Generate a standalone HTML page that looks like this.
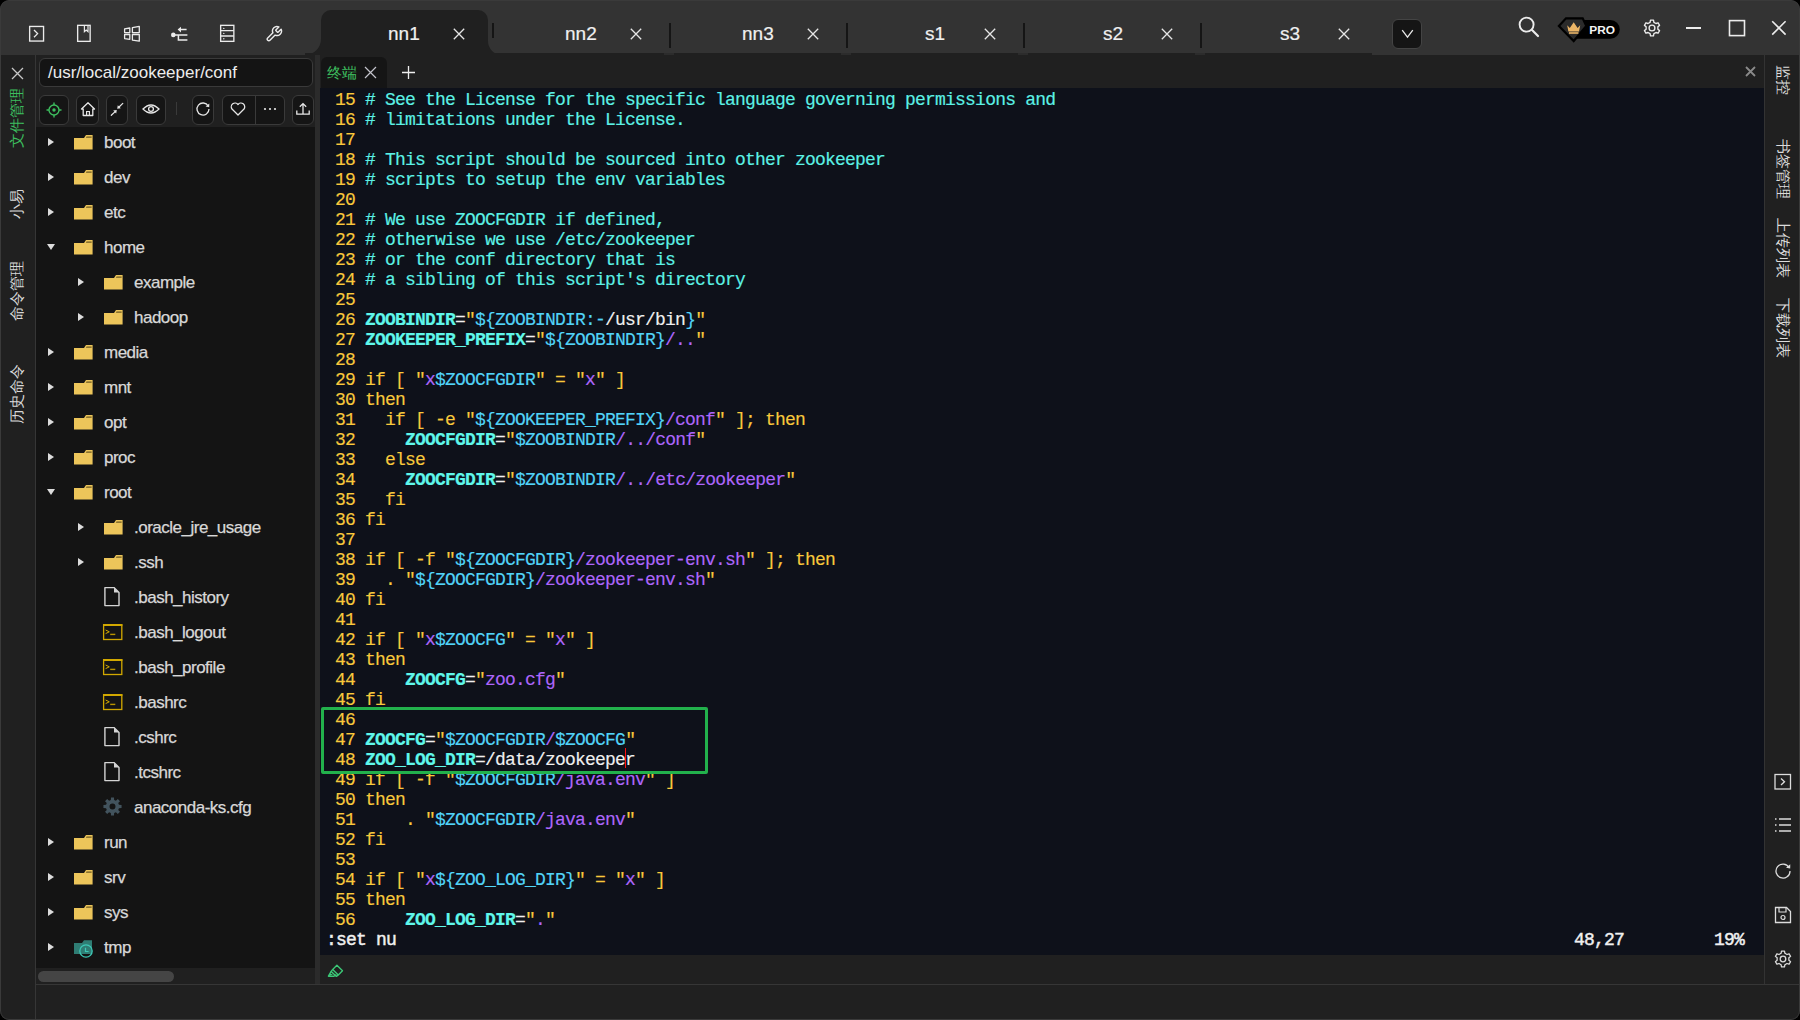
<!DOCTYPE html>
<html><head><meta charset="utf-8">
<style>
*{box-sizing:border-box}
html,body{margin:0;padding:0;width:1800px;height:1020px;overflow:hidden;background:#000}
body{font-family:"Liberation Sans",sans-serif;position:relative}
.abs{position:absolute}
svg{display:block}
#win{position:absolute;left:0;top:0;width:1800px;height:1020px;border-radius:9px;background:#333333;overflow:hidden}
/* title tabs */
.tab{position:absolute;top:10px;height:45px;color:#e6e6e6;font-size:18px}
.tabtxt{position:absolute;top:24px;font-size:19px;color:#f0f0f0;line-height:20px;-webkit-text-stroke:0.2px #f0f0f0}
.tabx{position:absolute;top:28px}
.tsep{position:absolute;top:23px;width:2px;height:25px;background:#151515}
/* panels */
#lstrip{position:absolute;left:0;top:55px;width:36px;height:965px;background:#202020;border-right:1px solid #363636}
#fpanel{position:absolute;left:36px;top:55px;width:279px;height:929px;background:#202020}
#tree{position:absolute;left:36px;top:127px;width:279px;height:841px;background:#141414}
#splitter{position:absolute;left:315px;top:55px;width:5px;height:929px;background:#2b2b2b}
#ttabbar{position:absolute;left:320px;top:55px;width:1444px;height:33px;background:#202020}
#editor{position:absolute;left:320px;top:88px;width:1444px;height:867px;background:#0e111a;overflow:hidden}
#ebar{position:absolute;left:320px;top:955px;width:1444px;height:29px;background:#202020}
#rstrip{position:absolute;left:1764px;top:55px;width:36px;height:929px;background:#202020;border-left:1px solid #333}
#bottom{position:absolute;left:36px;top:984px;width:1764px;height:36px;background:#202020;border-top:1px solid #363636}
.tn{position:absolute;font-size:17px;letter-spacing:-0.5px;color:#d8d8d8;-webkit-text-stroke:0.25px #d8d8d8;line-height:22px;white-space:pre}
.btn{position:absolute;top:95px;height:30px;border:1px solid #3a3a3a;border-radius:6px;background:#151515}
/* code */
.ln{position:absolute;left:5px;height:20px;line-height:20px;font-family:"Liberation Mono",monospace;font-size:18px;letter-spacing:-0.8px;white-space:pre;transform:scaleY(1.05);transform-origin:0 16px;-webkit-text-stroke:0.15px}
.n{color:#f9c93c}
.c{color:#5cf2e6}
.k{color:#f9c93c}
.v{color:#5ff7ea;font-weight:bold}
.i{color:#52d4f8}
.s{color:#ad66fb}
.w{color:#f0f0f0}
.vt{position:absolute;font-size:15px;line-height:16px;white-space:nowrap;transform-origin:0 0}
</style></head><body>
<div id="win">
  <!-- title bar toolbar icons -->
  <svg class="abs" style="left:28px;top:25px" width="18" height="18" viewBox="0 0 18 18"><rect x="1.65" y="1.45" width="13.9" height="14.6" fill="none" stroke="#ebebeb" stroke-width="1.35"/><path d="M6 5 L9.6 8.6 L6 12.2" fill="none" stroke="#ebebeb" stroke-width="1.3"/></svg>
  <svg class="abs" style="left:76px;top:24px" width="16" height="19" viewBox="0 0 16 19"><rect x="1.65" y="1.35" width="12.5" height="16" fill="none" stroke="#ebebeb" stroke-width="1.35"/><path d="M8.4 1.2 V7.6 L10.2 6 L12 7.6 V1.2" fill="none" stroke="#ebebeb" stroke-width="1.2"/></svg>
  <svg class="abs" style="left:123px;top:25px" width="18" height="18" viewBox="0 0 18 18"><path d="M1.6 3.8 L6.8 3 V7.6 H1.6 Z M9.4 2.6 L16.3 1.4 V7.6 H9.4 Z M1.6 9.5 H6.8 V14.3 L1.6 13.6 Z M9.4 9.5 H16.3 V16.2 L9.4 15.1 Z" fill="none" stroke="#ebebeb" stroke-width="1.3" stroke-linejoin="round"/></svg>
  <svg class="abs" style="left:170px;top:25px" width="19" height="17" viewBox="0 0 19 17"><path d="M10.5 4.6 H16.6" stroke="#ebebeb" stroke-width="1.5"/><path d="M7.6 4.6 L11 1.8 V7.4 Z" fill="#ebebeb"/><circle cx="3.3" cy="9.9" r="2.3" fill="#ebebeb"/><path d="M3.3 9.9 H17.4 M8.4 9.9 V14.9 H17.4" fill="none" stroke="#ebebeb" stroke-width="1.5"/></svg>
  <svg class="abs" style="left:219px;top:24px" width="17" height="19" viewBox="0 0 17 19"><rect x="1.65" y="1.35" width="13.2" height="16" fill="none" stroke="#ebebeb" stroke-width="1.35"/><path d="M1.65 6.6 H14.85 M1.65 12 H14.85" stroke="#ebebeb" stroke-width="1.3"/><circle cx="4.8" cy="4.4" r="0.7" fill="#ebebeb"/><circle cx="4.8" cy="9.4" r="0.7" fill="#ebebeb"/><circle cx="4.8" cy="14.8" r="0.7" fill="#ebebeb"/></svg>
  <svg class="abs" style="left:265px;top:25px" width="18" height="18" viewBox="0 0 24 24"><path d="M14.7 6.3a1 1 0 0 0 0 1.4l1.6 1.6a1 1 0 0 0 1.4 0l3.77-3.77a6 6 0 0 1-7.94 7.94l-6.91 6.91a2.12 2.12 0 0 1-3-3l6.91-6.91a6 6 0 0 1 7.94-7.94l-3.76 3.76z" fill="none" stroke="#ebebeb" stroke-width="1.9" stroke-linejoin="round"/></svg>

  <!-- active tab -->
  <div class="abs" style="left:321px;top:10px;width:167px;height:46px;background:#202020;border-radius:10px 10px 0 0"></div>
  <svg class="abs" style="left:305px;top:39px" width="16" height="16" viewBox="0 0 16 16"><path d="M0 16 A16 16 0 0 0 16 0 V16 Z" fill="#202020"/></svg>
  <svg class="abs" style="left:488px;top:41px" width="14" height="14" viewBox="0 0 14 14"><path d="M14 14 A14 14 0 0 1 0 0 V14 Z" fill="#202020"/></svg>
  <div class="tabtxt" style="left:388px">nn1</div>
  <div class="tabtxt" style="left:565px">nn2</div>
  <div class="tabtxt" style="left:742px">nn3</div>
  <div class="tabtxt" style="left:925px">s1</div>
  <div class="tabtxt" style="left:1103px">s2</div>
  <div class="tabtxt" style="left:1280px">s3</div>
  <svg class="abs" style="left:453px;top:28px" width="12" height="12" viewBox="0 0 12 12"><path d="M0.8 0.8 L11.2 11.2 M11.2 0.8 L0.8 11.2" stroke="#e6e6e6" stroke-width="1.3"/></svg><svg class="abs" style="left:630px;top:28px" width="12" height="12" viewBox="0 0 12 12"><path d="M0.8 0.8 L11.2 11.2 M11.2 0.8 L0.8 11.2" stroke="#e6e6e6" stroke-width="1.3"/></svg><svg class="abs" style="left:807px;top:28px" width="12" height="12" viewBox="0 0 12 12"><path d="M0.8 0.8 L11.2 11.2 M11.2 0.8 L0.8 11.2" stroke="#e6e6e6" stroke-width="1.3"/></svg><svg class="abs" style="left:984px;top:28px" width="12" height="12" viewBox="0 0 12 12"><path d="M0.8 0.8 L11.2 11.2 M11.2 0.8 L0.8 11.2" stroke="#e6e6e6" stroke-width="1.3"/></svg><svg class="abs" style="left:1161px;top:28px" width="12" height="12" viewBox="0 0 12 12"><path d="M0.8 0.8 L11.2 11.2 M11.2 0.8 L0.8 11.2" stroke="#e6e6e6" stroke-width="1.3"/></svg><svg class="abs" style="left:1338px;top:28px" width="12" height="12" viewBox="0 0 12 12"><path d="M0.8 0.8 L11.2 11.2 M11.2 0.8 L0.8 11.2" stroke="#e6e6e6" stroke-width="1.3"/></svg>
  <div class="abs" style="left:305px;top:53px;width:1067px;height:2px;background:#202020"></div>
  <div class="abs" style="left:664px;top:53px;width:10px;height:2px;background:#2c2c2c"></div>
  <div class="abs" style="left:841px;top:53px;width:10px;height:2px;background:#2c2c2c"></div>
  <div class="abs" style="left:1018px;top:53px;width:10px;height:2px;background:#2c2c2c"></div>
  <div class="abs" style="left:1195px;top:53px;width:10px;height:2px;background:#2c2c2c"></div>
  <div class="tsep" style="left:492px;height:15px"></div>
  <div class="tsep" style="left:669px"></div>
  <div class="tsep" style="left:846px"></div>
  <div class="tsep" style="left:1023px"></div>
  <div class="tsep" style="left:1200px"></div>
  <div class="abs" style="left:1392px;top:19px;width:30px;height:30px;background:#151515;border:1px solid #444;border-radius:6px"></div>
  <svg class="abs" style="left:1401px;top:29px" width="13" height="10" viewBox="0 0 13 10"><path d="M1.2 1.2 L6.5 8.2 L11.8 1.2" fill="none" stroke="#e8e8e8" stroke-width="1.3"/></svg>

  <!-- window controls -->
  <svg class="abs" style="left:1518px;top:16px" width="22" height="22" viewBox="0 0 22 22"><circle cx="8.6" cy="8.6" r="7" fill="none" stroke="#ececec" stroke-width="1.9"/><path d="M13.8 13.8 L20 20" stroke="#ececec" stroke-width="2.2" stroke-linecap="round"/></svg>
  <svg class="abs" style="left:1557px;top:16px" width="66" height="27" viewBox="0 0 66 27"><path d="M18 4 H53.4 A9.35 9.35 0 0 1 53.4 22.7 H18 Z" fill="#000"/><path d="M1.9 10 L9 2.3 H25.7 L29.3 10 L16.7 25 Z" fill="#2b2b2b" stroke="#000" stroke-width="2.2" stroke-linejoin="miter"/><path d="M10.2 9.2 L12.8 12 L16.7 6.3 L20.6 12 L23.2 9.2 L22 15.4 H11.4 Z" fill="#ebb566"/><rect x="12" y="16.2" width="9.4" height="1.6" fill="#ebb566"/><text x="32.3" y="17.6" font-family="Liberation Sans" font-weight="bold" font-size="11.5" fill="#f4f4f4" textLength="25.7" lengthAdjust="spacingAndGlyphs">PRO</text></svg>
  <svg class="abs" style="left:1643px;top:19px" width="18" height="18" viewBox="0 0 18 18"><path d="M7.09 3.31 L7.50 1.14 L10.50 1.14 L10.91 3.31 L12.97 4.50 L15.06 3.77 L16.56 6.37 L14.88 7.81 L14.88 10.19 L16.56 11.63 L15.06 14.23 L12.97 13.50 L10.91 14.69 L10.50 16.86 L7.50 16.86 L7.09 14.69 L5.03 13.50 L2.94 14.23 L1.44 11.63 L3.12 10.19 L3.12 7.81 L1.44 6.37 L2.94 3.77 L5.03 4.50Z" fill="none" stroke="#ececec" stroke-width="1.35" stroke-linejoin="round"/><circle cx="9" cy="9" r="2.9" fill="none" stroke="#ececec" stroke-width="1.35"/></svg>
  <div class="abs" style="left:1686px;top:27px;width:15px;height:1.6px;background:#ececec"></div>
  <svg class="abs" style="left:1728px;top:19px" width="18" height="18" viewBox="0 0 18 18"><rect x="1.5" y="1.6" width="15" height="15" fill="none" stroke="#ececec" stroke-width="1.6"/></svg>
  <svg class="abs" style="left:1771px;top:20px" width="16" height="16" viewBox="0 0 16 16"><path d="M1.2 1.2 L14.6 14.6 M14.6 1.2 L1.2 14.6" stroke="#ececec" stroke-width="1.6"/></svg>

  <!-- panels -->
  <div id="lstrip"></div>
  <div id="fpanel"></div>
  <div id="tree"></div>
  <div id="splitter"></div>
  <div id="ttabbar"></div>
  <div id="editor">
<div class="ln" style="top:2px"><span class="n"> 15 </span><span class="c"># See the License for the specific language governing permissions and</span></div>
<div class="ln" style="top:22px"><span class="n"> 16 </span><span class="c"># limitations under the License.</span></div>
<div class="ln" style="top:42px"><span class="n"> 17 </span></div>
<div class="ln" style="top:62px"><span class="n"> 18 </span><span class="c"># This script should be sourced into other zookeeper</span></div>
<div class="ln" style="top:82px"><span class="n"> 19 </span><span class="c"># scripts to setup the env variables</span></div>
<div class="ln" style="top:102px"><span class="n"> 20 </span></div>
<div class="ln" style="top:122px"><span class="n"> 21 </span><span class="c"># We use ZOOCFGDIR if defined,</span></div>
<div class="ln" style="top:142px"><span class="n"> 22 </span><span class="c"># otherwise we use /etc/zookeeper</span></div>
<div class="ln" style="top:162px"><span class="n"> 23 </span><span class="c"># or the conf directory that is</span></div>
<div class="ln" style="top:182px"><span class="n"> 24 </span><span class="c"># a sibling of this script&#x27;s directory</span></div>
<div class="ln" style="top:202px"><span class="n"> 25 </span></div>
<div class="ln" style="top:222px"><span class="n"> 26 </span><span class="v">ZOOBINDIR</span><span class="w">=</span><span class="k">&quot;</span><span class="i">${ZOOBINDIR:-</span><span class="w">/usr/bin</span><span class="i">}</span><span class="k">&quot;</span></div>
<div class="ln" style="top:242px"><span class="n"> 27 </span><span class="v">ZOOKEEPER_PREFIX</span><span class="w">=</span><span class="k">&quot;</span><span class="i">${ZOOBINDIR}</span><span class="s">/..</span><span class="k">&quot;</span></div>
<div class="ln" style="top:262px"><span class="n"> 28 </span></div>
<div class="ln" style="top:282px"><span class="n"> 29 </span><span class="k">if [ &quot;</span><span class="s">x</span><span class="i">$ZOOCFGDIR</span><span class="k">&quot; = &quot;</span><span class="s">x</span><span class="k">&quot; ]</span></div>
<div class="ln" style="top:302px"><span class="n"> 30 </span><span class="k">then</span></div>
<div class="ln" style="top:322px"><span class="n"> 31 </span><span class="k">  if [ -e &quot;</span><span class="i">${ZOOKEEPER_PREFIX}</span><span class="s">/conf</span><span class="k">&quot; ]; then</span></div>
<div class="ln" style="top:342px"><span class="n"> 32 </span><span class="w">    </span><span class="v">ZOOCFGDIR</span><span class="w">=</span><span class="k">&quot;</span><span class="i">$ZOOBINDIR</span><span class="s">/../conf</span><span class="k">&quot;</span></div>
<div class="ln" style="top:362px"><span class="n"> 33 </span><span class="k">  else</span></div>
<div class="ln" style="top:382px"><span class="n"> 34 </span><span class="w">    </span><span class="v">ZOOCFGDIR</span><span class="w">=</span><span class="k">&quot;</span><span class="i">$ZOOBINDIR</span><span class="s">/../etc/zookeeper</span><span class="k">&quot;</span></div>
<div class="ln" style="top:402px"><span class="n"> 35 </span><span class="k">  fi</span></div>
<div class="ln" style="top:422px"><span class="n"> 36 </span><span class="k">fi</span></div>
<div class="ln" style="top:442px"><span class="n"> 37 </span></div>
<div class="ln" style="top:462px"><span class="n"> 38 </span><span class="k">if [ -f &quot;</span><span class="i">${ZOOCFGDIR}</span><span class="s">/zookeeper-env.sh</span><span class="k">&quot; ]; then</span></div>
<div class="ln" style="top:482px"><span class="n"> 39 </span><span class="k">  . &quot;</span><span class="i">${ZOOCFGDIR}</span><span class="s">/zookeeper-env.sh</span><span class="k">&quot;</span></div>
<div class="ln" style="top:502px"><span class="n"> 40 </span><span class="k">fi</span></div>
<div class="ln" style="top:522px"><span class="n"> 41 </span></div>
<div class="ln" style="top:542px"><span class="n"> 42 </span><span class="k">if [ &quot;</span><span class="s">x</span><span class="i">$ZOOCFG</span><span class="k">&quot; = &quot;</span><span class="s">x</span><span class="k">&quot; ]</span></div>
<div class="ln" style="top:562px"><span class="n"> 43 </span><span class="k">then</span></div>
<div class="ln" style="top:582px"><span class="n"> 44 </span><span class="w">    </span><span class="v">ZOOCFG</span><span class="w">=</span><span class="k">&quot;</span><span class="s">zoo.cfg</span><span class="k">&quot;</span></div>
<div class="ln" style="top:602px"><span class="n"> 45 </span><span class="k">fi</span></div>
<div class="ln" style="top:622px"><span class="n"> 46 </span></div>
<div class="ln" style="top:642px"><span class="n"> 47 </span><span class="v">ZOOCFG</span><span class="w">=</span><span class="k">&quot;</span><span class="i">$ZOOCFGDIR</span><span class="s">/</span><span class="i">$ZOOCFG</span><span class="k">&quot;</span></div>
<div class="ln" style="top:662px"><span class="n"> 48 </span><span class="v">ZOO_LOG_DIR</span><span class="w">=/data/zookeeper</span></div>
<div class="ln" style="top:682px"><span class="n"> 49 </span><span class="k">if [ -f &quot;</span><span class="i">$ZOOCFGDIR</span><span class="s">/java.env</span><span class="k">&quot; ]</span></div>
<div class="ln" style="top:702px"><span class="n"> 50 </span><span class="k">then</span></div>
<div class="ln" style="top:722px"><span class="n"> 51 </span><span class="k">    . &quot;</span><span class="i">$ZOOCFGDIR</span><span class="s">/java.env</span><span class="k">&quot;</span></div>
<div class="ln" style="top:742px"><span class="n"> 52 </span><span class="k">fi</span></div>
<div class="ln" style="top:762px"><span class="n"> 53 </span></div>
<div class="ln" style="top:782px"><span class="n"> 54 </span><span class="k">if [ &quot;</span><span class="s">x</span><span class="i">${ZOO_LOG_DIR}</span><span class="k">&quot; = &quot;</span><span class="s">x</span><span class="k">&quot; ]</span></div>
<div class="ln" style="top:802px"><span class="n"> 55 </span><span class="k">then</span></div>
<div class="ln" style="top:822px"><span class="n"> 56 </span><span class="w">    </span><span class="v">ZOO_LOG_DIR</span><span class="w">=</span><span class="k">&quot;</span><span class="s">.</span><span class="k">&quot;</span></div>
    <div class="ln" style="top:842px;left:6px;-webkit-text-stroke:0.45px #f0f0f0"><span class="w">:set nu</span></div>
    <div class="ln" style="top:842px;left:1254px;-webkit-text-stroke:0.45px #f0f0f0"><span class="w">48,27</span></div>
    <div class="ln" style="top:842px;left:1394px;-webkit-text-stroke:0.45px #f0f0f0"><span class="w">19%</span></div>
    <div class="abs" style="left:1px;top:619px;width:387px;height:67px;border:3px solid #22b14c;border-radius:2px"></div>
    <div class="abs" style="left:305px;top:660px;width:1px;height:20px;background:#ff1010"></div>
  </div>
  <div id="ebar"></div>
  <div id="rstrip"></div>
  <div id="bottom"></div>

  <!-- left strip -->
  <svg class="abs" style="left:11px;top:67px" width="13" height="13" viewBox="0 0 13 13"><path d="M1 1 L12 12 M12 1 L1 12" stroke="#c8c8c8" stroke-width="1.3"/></svg>
  <div class="vt" style="left:9px;top:148px;transform:rotate(-90deg);color:#3dbd5e">文件管理</div>
  <div class="vt" style="left:9px;top:219px;transform:rotate(-90deg);color:#d8d8d8">小易</div>
  <div class="vt" style="left:9px;top:321px;transform:rotate(-90deg);color:#d8d8d8">命令管理</div>
  <div class="vt" style="left:9px;top:424px;transform:rotate(-90deg);color:#d8d8d8">历史命令</div>

  <!-- file panel -->
  <div class="abs" style="left:39px;top:58px;width:274px;height:29px;border:1px solid #3a3a3a;border-radius:6px;background:#141414"></div>
  <div class="abs" style="left:48px;top:63px;font-size:17px;line-height:20px;color:#ececec">/usr/local/zookeeper/conf</div>
  <div class="btn" style="left:39px;width:30px"></div>
  <div class="btn" style="left:76px;width:23px"></div>
  <div class="btn" style="left:106px;width:22px"></div>
  <div class="btn" style="left:136px;width:30px"></div>
  <div class="abs" style="left:176px;top:102px;width:1px;height:13px;background:#3a3a3a"></div>
  <div class="btn" style="left:192px;width:22px"></div>
  <div class="btn" style="left:222px;width:63px"></div>
  <div class="abs" style="left:255px;top:96px;width:1px;height:28px;background:#3a3a3a"></div>
  <div class="btn" style="left:292px;width:22px"></div>
  <!-- toolbar icons -->
  <svg class="abs" style="left:46px;top:102px" width="16" height="16" viewBox="0 0 16 16"><circle cx="8" cy="8" r="5" fill="none" stroke="#3dbd5e" stroke-width="1.4"/><circle cx="8" cy="8" r="1.7" fill="#3dbd5e"/><path d="M8 0.5 V3 M8 13 V15.5 M0.5 8 H3 M13 8 H15.5" stroke="#3dbd5e" stroke-width="1.4"/></svg>
  <svg class="abs" style="left:80px;top:101px" width="16" height="16" viewBox="0 0 16 16"><path d="M1.5 8 L8 1.8 L14.5 8 H12.8 V14.5 H3.2 V8 Z" fill="none" stroke="#e6e6e6" stroke-width="1.3" stroke-linejoin="round"/><path d="M6.6 14.5 V10.5 H9.4 V14.5" fill="none" stroke="#e6e6e6" stroke-width="1.2"/></svg>
  <svg class="abs" style="left:108px;top:101px" width="18" height="18" viewBox="0 0 18 18"><path d="M3.3 14.3 L7.2 10.6 M14.8 2.4 L10.8 6.3" stroke="#e6e6e6" stroke-width="1.2" stroke-linecap="round"/><path d="M8.8 9 L5.2 9.6 L8.2 12.6 Z M9.2 7.8 L9.8 4.2 L12.8 7.2 Z" fill="#e6e6e6"/></svg>
  <svg class="abs" style="left:142px;top:103px" width="18" height="12" viewBox="0 0 18 12"><path d="M1 6 Q9 -2 17 6 Q9 14 1 6 Z" fill="none" stroke="#e6e6e6" stroke-width="1.3"/><circle cx="9" cy="6" r="2.4" fill="none" stroke="#e6e6e6" stroke-width="1.3"/></svg>
  <svg class="abs" style="left:195px;top:101px" width="16" height="16" viewBox="0 0 16 16"><path d="M13.2 5 A6 6 0 1 0 14 8" fill="none" stroke="#e6e6e6" stroke-width="1.3"/><path d="M14.3 2.5 L14.2 6.3 L10.6 5.6 Z" fill="#e6e6e6"/></svg>
  <svg class="abs" style="left:230px;top:102px" width="16" height="14" viewBox="0 0 16 14"><path d="M8 13 L2 7 A3.4 3.4 0 0 1 8 2.6 A3.4 3.4 0 0 1 14 7 Z" fill="none" stroke="#e6e6e6" stroke-width="1.3" stroke-linejoin="round"/></svg>
  <svg class="abs" style="left:263px;top:107px" width="14" height="4" viewBox="0 0 14 4"><circle cx="2" cy="2" r="1.1" fill="#e6e6e6"/><circle cx="7" cy="2" r="1.1" fill="#e6e6e6"/><circle cx="12" cy="2" r="1.1" fill="#e6e6e6"/></svg>
  <svg class="abs" style="left:295px;top:102px" width="16" height="14" viewBox="0 0 16 14"><path d="M8 12 V2 M4.8 4.8 L8 1.6 L11.2 4.8" fill="none" stroke="#e6e6e6" stroke-width="1.3"/><path d="M1.8 8.5 V12.2 H14.2 V8.5" fill="none" stroke="#e6e6e6" stroke-width="1.3"/></svg>

<div class="abs" style="left:47px;top:137px"><svg class="tri" width="8" height="10" viewBox="0 0 8 10"><path d="M1 1 L7 5 L1 9 Z" fill="#dcdcdc"/></svg></div><div class="abs" style="left:74px;top:134px"><svg width="20" height="16" viewBox="0 0 20 16"><path d="M0 4 H10 L12 1 H18.6 V15.6 H0 Z" fill="#ecc55a"/><path d="M12.5 2.6 H17.6 V3.7 H11.8 Z" fill="#6e5a22"/></svg></div><div class="tn" style="left:104px;top:132px">boot</div>
<div class="abs" style="left:47px;top:172px"><svg class="tri" width="8" height="10" viewBox="0 0 8 10"><path d="M1 1 L7 5 L1 9 Z" fill="#dcdcdc"/></svg></div><div class="abs" style="left:74px;top:169px"><svg width="20" height="16" viewBox="0 0 20 16"><path d="M0 4 H10 L12 1 H18.6 V15.6 H0 Z" fill="#ecc55a"/><path d="M12.5 2.6 H17.6 V3.7 H11.8 Z" fill="#6e5a22"/></svg></div><div class="tn" style="left:104px;top:167px">dev</div>
<div class="abs" style="left:47px;top:207px"><svg class="tri" width="8" height="10" viewBox="0 0 8 10"><path d="M1 1 L7 5 L1 9 Z" fill="#dcdcdc"/></svg></div><div class="abs" style="left:74px;top:204px"><svg width="20" height="16" viewBox="0 0 20 16"><path d="M0 4 H10 L12 1 H18.6 V15.6 H0 Z" fill="#ecc55a"/><path d="M12.5 2.6 H17.6 V3.7 H11.8 Z" fill="#6e5a22"/></svg></div><div class="tn" style="left:104px;top:202px">etc</div>
<div class="abs" style="left:46px;top:243px"><svg class="tri" width="10" height="8" viewBox="0 0 10 8"><path d="M1 1 L9 1 L5 7 Z" fill="#dcdcdc"/></svg></div><div class="abs" style="left:74px;top:239px"><svg width="20" height="16" viewBox="0 0 20 16"><path d="M0 4 H10 L12 1 H18.6 V15.6 H0 Z" fill="#ecc55a"/><path d="M12.5 2.6 H17.6 V3.7 H11.8 Z" fill="#6e5a22"/></svg></div><div class="tn" style="left:104px;top:237px">home</div>
<div class="abs" style="left:77px;top:277px"><svg class="tri" width="8" height="10" viewBox="0 0 8 10"><path d="M1 1 L7 5 L1 9 Z" fill="#dcdcdc"/></svg></div><div class="abs" style="left:104px;top:274px"><svg width="20" height="16" viewBox="0 0 20 16"><path d="M0 4 H10 L12 1 H18.6 V15.6 H0 Z" fill="#ecc55a"/><path d="M12.5 2.6 H17.6 V3.7 H11.8 Z" fill="#6e5a22"/></svg></div><div class="tn" style="left:134px;top:272px">example</div>
<div class="abs" style="left:77px;top:312px"><svg class="tri" width="8" height="10" viewBox="0 0 8 10"><path d="M1 1 L7 5 L1 9 Z" fill="#dcdcdc"/></svg></div><div class="abs" style="left:104px;top:309px"><svg width="20" height="16" viewBox="0 0 20 16"><path d="M0 4 H10 L12 1 H18.6 V15.6 H0 Z" fill="#ecc55a"/><path d="M12.5 2.6 H17.6 V3.7 H11.8 Z" fill="#6e5a22"/></svg></div><div class="tn" style="left:134px;top:307px">hadoop</div>
<div class="abs" style="left:47px;top:347px"><svg class="tri" width="8" height="10" viewBox="0 0 8 10"><path d="M1 1 L7 5 L1 9 Z" fill="#dcdcdc"/></svg></div><div class="abs" style="left:74px;top:344px"><svg width="20" height="16" viewBox="0 0 20 16"><path d="M0 4 H10 L12 1 H18.6 V15.6 H0 Z" fill="#ecc55a"/><path d="M12.5 2.6 H17.6 V3.7 H11.8 Z" fill="#6e5a22"/></svg></div><div class="tn" style="left:104px;top:342px">media</div>
<div class="abs" style="left:47px;top:382px"><svg class="tri" width="8" height="10" viewBox="0 0 8 10"><path d="M1 1 L7 5 L1 9 Z" fill="#dcdcdc"/></svg></div><div class="abs" style="left:74px;top:379px"><svg width="20" height="16" viewBox="0 0 20 16"><path d="M0 4 H10 L12 1 H18.6 V15.6 H0 Z" fill="#ecc55a"/><path d="M12.5 2.6 H17.6 V3.7 H11.8 Z" fill="#6e5a22"/></svg></div><div class="tn" style="left:104px;top:377px">mnt</div>
<div class="abs" style="left:47px;top:417px"><svg class="tri" width="8" height="10" viewBox="0 0 8 10"><path d="M1 1 L7 5 L1 9 Z" fill="#dcdcdc"/></svg></div><div class="abs" style="left:74px;top:414px"><svg width="20" height="16" viewBox="0 0 20 16"><path d="M0 4 H10 L12 1 H18.6 V15.6 H0 Z" fill="#ecc55a"/><path d="M12.5 2.6 H17.6 V3.7 H11.8 Z" fill="#6e5a22"/></svg></div><div class="tn" style="left:104px;top:412px">opt</div>
<div class="abs" style="left:47px;top:452px"><svg class="tri" width="8" height="10" viewBox="0 0 8 10"><path d="M1 1 L7 5 L1 9 Z" fill="#dcdcdc"/></svg></div><div class="abs" style="left:74px;top:449px"><svg width="20" height="16" viewBox="0 0 20 16"><path d="M0 4 H10 L12 1 H18.6 V15.6 H0 Z" fill="#ecc55a"/><path d="M12.5 2.6 H17.6 V3.7 H11.8 Z" fill="#6e5a22"/></svg></div><div class="tn" style="left:104px;top:447px">proc</div>
<div class="abs" style="left:46px;top:488px"><svg class="tri" width="10" height="8" viewBox="0 0 10 8"><path d="M1 1 L9 1 L5 7 Z" fill="#dcdcdc"/></svg></div><div class="abs" style="left:74px;top:484px"><svg width="20" height="16" viewBox="0 0 20 16"><path d="M0 4 H10 L12 1 H18.6 V15.6 H0 Z" fill="#ecc55a"/><path d="M12.5 2.6 H17.6 V3.7 H11.8 Z" fill="#6e5a22"/></svg></div><div class="tn" style="left:104px;top:482px">root</div>
<div class="abs" style="left:77px;top:522px"><svg class="tri" width="8" height="10" viewBox="0 0 8 10"><path d="M1 1 L7 5 L1 9 Z" fill="#dcdcdc"/></svg></div><div class="abs" style="left:104px;top:519px"><svg width="20" height="16" viewBox="0 0 20 16"><path d="M0 4 H10 L12 1 H18.6 V15.6 H0 Z" fill="#ecc55a"/><path d="M12.5 2.6 H17.6 V3.7 H11.8 Z" fill="#6e5a22"/></svg></div><div class="tn" style="left:134px;top:517px">.oracle_jre_usage</div>
<div class="abs" style="left:77px;top:557px"><svg class="tri" width="8" height="10" viewBox="0 0 8 10"><path d="M1 1 L7 5 L1 9 Z" fill="#dcdcdc"/></svg></div><div class="abs" style="left:104px;top:554px"><svg width="20" height="16" viewBox="0 0 20 16"><path d="M0 4 H10 L12 1 H18.6 V15.6 H0 Z" fill="#ecc55a"/><path d="M12.5 2.6 H17.6 V3.7 H11.8 Z" fill="#6e5a22"/></svg></div><div class="tn" style="left:134px;top:552px">.ssh</div>
<div class="abs" style="left:103px;top:586px"><svg width="18" height="21" viewBox="0 0 18 21"><path d="M1.9 1.6 H11 L16 6.6 V19.6 H1.9 Z" fill="none" stroke="#d4d4d4" stroke-width="1.4" stroke-linejoin="round"/><path d="M11 1.6 V6.6 H16 Z" fill="#d4d4d4"/></svg></div><div class="tn" style="left:134px;top:587px">.bash_history</div>
<div class="abs" style="left:102px;top:623px"><svg width="21" height="18" viewBox="0 0 21 18"><rect x="1.6" y="1.9" width="18.2" height="14.6" fill="none" stroke="#d2a800" stroke-width="1.3"/><path d="M1 2 H20.4" stroke="#d2a800" stroke-width="2"/><path d="M3.6 7 L7.3 8.8 L3.6 10.6" fill="none" stroke="#d2a800" stroke-width="1"/><path d="M8.2 11.4 H13.3" stroke="#b89400" stroke-width="1.4"/></svg></div><div class="tn" style="left:134px;top:622px">.bash_logout</div>
<div class="abs" style="left:102px;top:658px"><svg width="21" height="18" viewBox="0 0 21 18"><rect x="1.6" y="1.9" width="18.2" height="14.6" fill="none" stroke="#d2a800" stroke-width="1.3"/><path d="M1 2 H20.4" stroke="#d2a800" stroke-width="2"/><path d="M3.6 7 L7.3 8.8 L3.6 10.6" fill="none" stroke="#d2a800" stroke-width="1"/><path d="M8.2 11.4 H13.3" stroke="#b89400" stroke-width="1.4"/></svg></div><div class="tn" style="left:134px;top:657px">.bash_profile</div>
<div class="abs" style="left:102px;top:693px"><svg width="21" height="18" viewBox="0 0 21 18"><rect x="1.6" y="1.9" width="18.2" height="14.6" fill="none" stroke="#d2a800" stroke-width="1.3"/><path d="M1 2 H20.4" stroke="#d2a800" stroke-width="2"/><path d="M3.6 7 L7.3 8.8 L3.6 10.6" fill="none" stroke="#d2a800" stroke-width="1"/><path d="M8.2 11.4 H13.3" stroke="#b89400" stroke-width="1.4"/></svg></div><div class="tn" style="left:134px;top:692px">.bashrc</div>
<div class="abs" style="left:103px;top:726px"><svg width="18" height="21" viewBox="0 0 18 21"><path d="M1.9 1.6 H11 L16 6.6 V19.6 H1.9 Z" fill="none" stroke="#d4d4d4" stroke-width="1.4" stroke-linejoin="round"/><path d="M11 1.6 V6.6 H16 Z" fill="#d4d4d4"/></svg></div><div class="tn" style="left:134px;top:727px">.cshrc</div>
<div class="abs" style="left:103px;top:761px"><svg width="18" height="21" viewBox="0 0 18 21"><path d="M1.9 1.6 H11 L16 6.6 V19.6 H1.9 Z" fill="none" stroke="#d4d4d4" stroke-width="1.4" stroke-linejoin="round"/><path d="M11 1.6 V6.6 H16 Z" fill="#d4d4d4"/></svg></div><div class="tn" style="left:134px;top:762px">.tcshrc</div>
<div class="abs" style="left:102px;top:796px"><svg width="21" height="21" viewBox="0 0 24 24"><path fill-rule="evenodd" fill="#42535d" d="M10.11 4.64 L10.28 1.64 L13.72 1.64 L13.89 4.64 L15.87 5.46 L18.10 3.46 L20.54 5.90 L18.54 8.13 L19.36 10.11 L22.36 10.28 L22.36 13.72 L19.36 13.89 L18.54 15.87 L20.54 18.10 L18.10 20.54 L15.87 18.54 L13.89 19.36 L13.72 22.36 L10.28 22.36 L10.11 19.36 L8.13 18.54 L5.90 20.54 L3.46 18.10 L5.46 15.87 L4.64 13.89 L1.64 13.72 L1.64 10.28 L4.64 10.11 L5.46 8.13 L3.46 5.90 L5.90 3.46 L8.13 5.46Z M12 8.6 A3.4 3.4 0 1 0 12 15.4 A3.4 3.4 0 1 0 12 8.6 Z"/></svg></div><div class="tn" style="left:134px;top:797px">anaconda-ks.cfg</div>
<div class="abs" style="left:47px;top:837px"><svg class="tri" width="8" height="10" viewBox="0 0 8 10"><path d="M1 1 L7 5 L1 9 Z" fill="#dcdcdc"/></svg></div><div class="abs" style="left:74px;top:834px"><svg width="20" height="16" viewBox="0 0 20 16"><path d="M0 4 H10 L12 1 H18.6 V15.6 H0 Z" fill="#ecc55a"/><path d="M12.5 2.6 H17.6 V3.7 H11.8 Z" fill="#6e5a22"/></svg></div><div class="tn" style="left:104px;top:832px">run</div>
<div class="abs" style="left:47px;top:872px"><svg class="tri" width="8" height="10" viewBox="0 0 8 10"><path d="M1 1 L7 5 L1 9 Z" fill="#dcdcdc"/></svg></div><div class="abs" style="left:74px;top:869px"><svg width="20" height="16" viewBox="0 0 20 16"><path d="M0 4 H10 L12 1 H18.6 V15.6 H0 Z" fill="#ecc55a"/><path d="M12.5 2.6 H17.6 V3.7 H11.8 Z" fill="#6e5a22"/></svg></div><div class="tn" style="left:104px;top:867px">srv</div>
<div class="abs" style="left:47px;top:907px"><svg class="tri" width="8" height="10" viewBox="0 0 8 10"><path d="M1 1 L7 5 L1 9 Z" fill="#dcdcdc"/></svg></div><div class="abs" style="left:74px;top:904px"><svg width="20" height="16" viewBox="0 0 20 16"><path d="M0 4 H10 L12 1 H18.6 V15.6 H0 Z" fill="#ecc55a"/><path d="M12.5 2.6 H17.6 V3.7 H11.8 Z" fill="#6e5a22"/></svg></div><div class="tn" style="left:104px;top:902px">sys</div>
<div class="abs" style="left:47px;top:942px"><svg class="tri" width="8" height="10" viewBox="0 0 8 10"><path d="M1 1 L7 5 L1 9 Z" fill="#dcdcdc"/></svg></div><div class="abs" style="left:73px;top:939px"><svg width="22" height="22" viewBox="0 0 22 22"><path d="M1 4 H9 L11 1.2 H19 V15 H1 Z" fill="#2f7d74"/><circle cx="13" cy="12" r="6.2" fill="none" stroke="#3ec8b6" stroke-width="1.3"/><path d="M12.5 8.8 V12.5 H15.6" fill="none" stroke="#3ec8b6" stroke-width="1.2"/></svg></div><div class="tn" style="left:104px;top:937px">tmp</div>
  <div class="abs" style="left:38px;top:971px;width:136px;height:11px;border-radius:6px;background:#454545"></div>

  <!-- terminal tab bar -->
  <div class="abs" style="left:321px;top:57px;width:66px;height:31px;background:#151515;border-radius:6px 6px 0 0"></div>
  <div class="abs" style="left:327px;top:64px;font-size:15px;line-height:17px;color:#3dbd5e">终端</div>
  <svg class="abs" style="left:364px;top:66px" width="13" height="13" viewBox="0 0 13 13"><path d="M1 1 L12 12 M12 1 L1 12" stroke="#c4c4cc" stroke-width="1.2"/></svg>
  <svg class="abs" style="left:401px;top:65px" width="15" height="15" viewBox="0 0 15 15"><path d="M7.5 1 V14 M1 7.5 H14" stroke="#eeeeee" stroke-width="1.3"/></svg>
  <svg class="abs" style="left:1745px;top:66px" width="11" height="11" viewBox="0 0 11 11"><path d="M1 1 L10 10 M10 1 L1 10" stroke="#8a8a8a" stroke-width="1.8"/></svg>
  <!-- editor bottom bar pen -->
  <svg class="abs" style="left:326px;top:962px" width="18" height="16" viewBox="0 0 18 16"><path d="M10.9 3.2 L16.5 8.7 L12.3 12.9 L6.7 7.4 Z" fill="none" stroke="#3cc877" stroke-width="1.35" stroke-linejoin="round"/><path d="M6.7 7.4 L5.2 9.4 L10.4 14.4 L12.3 12.9" fill="none" stroke="#3cc877" stroke-width="1.35" stroke-linejoin="round"/><path d="M5.2 9.4 L2.4 14.2 H8 L10.4 12.6" fill="none" stroke="#3cc877" stroke-width="1.35" stroke-linejoin="round"/><path d="M2.4 14.2 L7 12.5 L4.3 11.6 Z" fill="#3cc877"/></svg>

  <!-- right strip -->
  <div class="vt" style="left:1791px;top:65px;transform:rotate(90deg);color:#dcdcdc">监控</div>
  <div class="vt" style="left:1791px;top:139px;transform:rotate(90deg);color:#dcdcdc">书签管理</div>
  <div class="vt" style="left:1791px;top:218px;transform:rotate(90deg);color:#dcdcdc">上传列表</div>
  <div class="vt" style="left:1791px;top:298px;transform:rotate(90deg);color:#dcdcdc">下载列表</div>
  <svg class="abs" style="left:1774px;top:773px" width="18" height="18" viewBox="0 0 18 18"><rect x="1" y="1.5" width="15.5" height="14.5" fill="none" stroke="#dcdcdc" stroke-width="1.3"/><path d="M7 5.5 L10.5 8.7 L7 12" fill="none" stroke="#dcdcdc" stroke-width="1.3"/></svg>
  <svg class="abs" style="left:1774px;top:817px" width="18" height="16" viewBox="0 0 18 16"><path d="M5 2 H17 M5 8 H17 M5 14 H17" stroke="#dcdcdc" stroke-width="1.3"/><path d="M1 2 H2.5 M1 8 H2.5 M1 14 H2.5" stroke="#dcdcdc" stroke-width="1.4"/></svg>
  <svg class="abs" style="left:1774px;top:862px" width="18" height="18" viewBox="0 0 18 18"><path d="M15 5.5 A7 7 0 1 0 16 9" fill="none" stroke="#dcdcdc" stroke-width="1.3"/><path d="M16.3 2.2 L16.2 6.6 L12 5.8 Z" fill="#dcdcdc"/></svg>
  <svg class="abs" style="left:1774px;top:906px" width="18" height="18" viewBox="0 0 18 18"><path d="M1.5 1.5 H12.5 L16.5 5.5 V16.5 H1.5 Z" fill="none" stroke="#dcdcdc" stroke-width="1.3"/><path d="M5 1.5 V6 H12 V1.5" fill="none" stroke="#dcdcdc" stroke-width="1.2"/><circle cx="9" cy="11.5" r="2" fill="none" stroke="#dcdcdc" stroke-width="1.2"/></svg>
  <svg class="abs" style="left:1774px;top:950px" width="18" height="18" viewBox="0 0 18 18"><path d="M7.09 3.31 L7.50 1.14 L10.50 1.14 L10.91 3.31 L12.97 4.50 L15.06 3.77 L16.56 6.37 L14.88 7.81 L14.88 10.19 L16.56 11.63 L15.06 14.23 L12.97 13.50 L10.91 14.69 L10.50 16.86 L7.50 16.86 L7.09 14.69 L5.03 13.50 L2.94 14.23 L1.44 11.63 L3.12 10.19 L3.12 7.81 L1.44 6.37 L2.94 3.77 L5.03 4.50Z" fill="none" stroke="#dcdcdc" stroke-width="1.3" stroke-linejoin="round"/><circle cx="9" cy="9" r="2.8" fill="none" stroke="#dcdcdc" stroke-width="1.3"/></svg>
  <div class="abs" style="left:0;top:0;width:1800px;height:1020px;border:1px solid #3a3a3a;border-radius:9px;pointer-events:none"></div>
</div>
</body></html>
